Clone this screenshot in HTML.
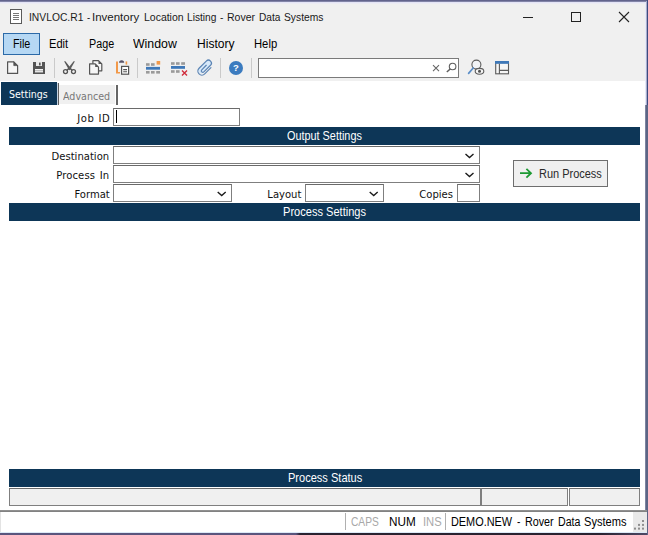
<!DOCTYPE html>
<html><head><meta charset="utf-8">
<style>
html,body{margin:0;padding:0;}
body{width:648px;height:535px;overflow:hidden;background:#f0f0f0;position:relative;font-family:"Liberation Sans",sans-serif;font-size:12px;color:#000;}
.abs{position:absolute;}
.t{position:absolute;white-space:nowrap;line-height:1;transform-origin:0 50%;}
.band{position:absolute;left:9px;width:631px;height:18px;background:#0d3657;}
.bt{position:absolute;white-space:nowrap;line-height:1;color:#fff;font-size:12px;transform-origin:0 50%;}
.inp{position:absolute;background:#fff;border:1px solid #7f7f7f;border-top-color:#6a6a6a;box-sizing:border-box;}
.lbl{position:absolute;white-space:nowrap;text-align:right;font-size:11px;line-height:1;color:#111;font-family:"DejaVu Sans","Liberation Sans",sans-serif;transform-origin:100% 50%;transform:scaleX(0.912);word-spacing:3px;}
.mn{font-size:12.5px;}
.sb{font-size:12.5px;}
</style></head><body>
<!-- window frame top -->
<div class="abs" style="left:0;top:0;width:648px;height:1px;background:#62648c"></div>
<div class="abs" style="left:0;top:1px;width:648px;height:1px;background:#8284a7"></div>
<div class="abs" style="left:0;top:2px;width:646px;height:1px;background:#e4e4f6"></div>
<div class="abs" style="left:0;top:3px;width:646px;height:1px;background:#ececf4"></div>
<!-- title -->
<svg class="abs" style="left:10px;top:9px" width="12" height="15" viewBox="0 0 12 15"><rect x="0.5" y="0.5" width="11" height="14" fill="#fff" stroke="#5a5a5a"/><path d="M3 4.5h6M3 6.5h6M3 8.5h6M3 10.5h6" stroke="#777" stroke-width="1"/></svg>
<div class="abs" style="left:0;top:12px;font-size:11px;color:#1a1a1a;height:11px;width:340px;"><span class="t" style="left:28.8px;top:0;transform:scaleX(0.936)">INVLOC.R1</span> <span class="t" style="left:86.5px;top:0;transform:scaleX(0.875)">-</span> <span class="t" style="left:92.06px;top:0;transform:scaleX(1.044)">Inventory</span> <span class="t" style="left:143.5px;top:0;transform:scaleX(0.952)">Location</span> <span class="t" style="left:186.7px;top:0;transform:scaleX(0.925)">Listing</span> <span class="t" style="left:220.2px;top:0;transform:scaleX(0.925)">-</span> <span class="t" style="left:227.0px;top:0;transform:scaleX(0.957)">Rover</span> <span class="t" style="left:259.1px;top:0;transform:scaleX(0.92)">Data</span> <span class="t" style="left:284.4px;top:0;transform:scaleX(0.935)">Systems</span> </div>
<svg class="abs" style="left:520px;top:8px" width="120" height="20" viewBox="0 0 120 20"><path d="M3 9.5h10" stroke="#222" stroke-width="1"/><rect x="51.5" y="4.5" width="9" height="9" fill="none" stroke="#222"/><path d="M99 4l10 10M109 4l-10 10" stroke="#222" stroke-width="1.1"/></svg>
<!-- menu -->
<div class="abs" style="left:3px;top:33px;width:37px;height:22px;box-sizing:border-box;border:1px solid #2c6aa8;background:#b6d8f4"></div>
<div class="t mn" style="left:12.8px;top:38px;transform:scaleX(0.86)">File</div>
<div class="t mn" style="left:49.4px;top:38px;transform:scaleX(0.89)">Edit</div>
<div class="t mn" style="left:88.9px;top:38px;transform:scaleX(0.86)">Page</div>
<div class="t mn" style="left:133px;top:38px;transform:scaleX(0.985)">Window</div>
<div class="t mn" style="left:196.5px;top:38px;transform:scaleX(0.964)">History</div>
<div class="t mn" style="left:253.8px;top:38px;transform:scaleX(0.90)">Help</div>
<!-- toolbar -->
<svg class="abs" style="left:0;top:56px" width="648" height="25" viewBox="0 0 648 25">
 <!-- new -->
 <path d="M7.6 5.8h6.2l3.8 3.8v7.8h-10z" fill="#f6f6f6" stroke="#555" stroke-width="1.2" stroke-linejoin="round"/>
 <path d="M13.8 5.8v3.8h3.8z" fill="#555" stroke="#555" stroke-width="0.8" stroke-linejoin="round"/>
 <!-- save -->
 <path d="M33 6h12v12h-12z" fill="#555"/>
 <rect x="36" y="6" width="6" height="4" fill="#e9e9e9"/>
 <rect x="39" y="6.6" width="1.6" height="2.8" fill="#555"/>
 <rect x="35" y="13" width="8" height="3.4" fill="#f4f4f4"/>
 <rect x="35" y="14.3" width="8" height="0.9" fill="#aaa"/>
 <!-- sep -->
 <rect x="54" y="2" width="1" height="20" fill="#cacaca"/>
 <!-- scissors -->
 <path d="M64.1 5.2h1.3l5.9 7.6l-2.2 1.4z" fill="#555"/>
 <path d="M74.9 5.2h-1.3l-5.9 7.6l2.2 1.4z" fill="#5c5c5c"/>
 <path d="M68.8 12.6l-2.2 2M70.2 12.6l2.2 2" stroke="#555" stroke-width="1.4"/>
 <circle cx="65.5" cy="15.6" r="2" fill="none" stroke="#555" stroke-width="1.3"/>
 <circle cx="73.5" cy="15.6" r="2" fill="none" stroke="#555" stroke-width="1.3"/>
 <!-- copy -->
 <path d="M92.9 4.7h5.6l3.3 3.3v6.8h-8.9z" fill="#f6f6f6" stroke="#555" stroke-width="1.2" stroke-linejoin="round"/>
 <path d="M98.5 4.7v3.3h3.3z" fill="#555"/>
 <path d="M89.6 7.8h5.6l3.3 3.3v7h-8.9z" fill="#f6f6f6" stroke="#555" stroke-width="1.2" stroke-linejoin="round"/>
 <path d="M95.2 7.8v3.3h3.3z" fill="#555"/>
 <!-- paste -->
 <path d="M116 5.4h2v10.6h2v1.6h-4z" fill="#f2994a"/>
 <rect x="125.6" y="5.4" width="1.6" height="3.2" fill="#f2994a"/>
 <path d="M119 6.8q0-2.6 2.6-2.6q2.6 0 2.6 2.6z" fill="#5a5468"/>
 <rect x="121.6" y="10.4" width="7" height="7.8" fill="#fff" stroke="#555" stroke-width="1.2"/>
 <path d="M123.2 13.6h3.8M123.2 15.8h3.8" stroke="#555" stroke-width="1.1"/>
 <!-- sep -->
 <rect x="137" y="2" width="1" height="20" fill="#cacaca"/>
 <!-- insert row -->
 <g fill="#9a9a9a">
 <rect x="146" y="7.2" width="3.6" height="2.6"/><rect x="151" y="7.2" width="3.6" height="2.6"/>
 <rect x="146" y="15" width="3.6" height="2.6"/><rect x="151" y="15" width="3.6" height="2.6"/><rect x="156.2" y="15" width="3.8" height="2.6"/>
 </g>
 <rect x="156.6" y="5" width="3.6" height="3.6" fill="#f2994a"/>
 <rect x="146" y="10.9" width="14" height="2.8" fill="#3e78b8"/>
 <!-- delete row -->
 <g fill="#9a9a9a">
 <rect x="171" y="6.2" width="3.6" height="2.6"/><rect x="176" y="6.2" width="3.6" height="2.6"/><rect x="181.2" y="6.2" width="3.8" height="2.6"/>
 <rect x="171" y="14.2" width="3.6" height="2.6"/><rect x="176" y="14.2" width="3.6" height="2.6"/>
 </g>
 <rect x="171" y="10" width="14" height="2.8" fill="#3e78b8"/>
 <path d="M182 14.6l5 5M187 14.6l-5 5" stroke="#d02c3c" stroke-width="1.4"/>
 <!-- paperclip -->
 <g transform="translate(205 11.7) rotate(45)">
 <path d="M-3.8 4.6V-5.6A3 3 0 0 1 2.2 -5.6V4.6A3 3 0 0 1 -3.8 4.6z" fill="#d6e8f9"/>
 <path d="M4.2 -4.2V4.6A4 4 0 0 1 -3.8 4.6V-5.6A3 3 0 0 1 2.2 -5.6V3.8A1.5 1.5 0 0 1 -0.8 3.8V-2.6" fill="none" stroke="#5b84b4" stroke-width="1.2" stroke-linecap="round"/>
 </g>
 <!-- sep -->
 <rect x="220" y="2" width="1" height="20" fill="#cacaca"/>
 <!-- help -->
 <circle cx="236" cy="12" r="7" fill="#3b7bbf"/>
 <text x="236" y="15.4" font-family="Liberation Sans, sans-serif" font-weight="bold" font-size="9.5" fill="#fff" text-anchor="middle">?</text>
 <!-- sep -->
 <rect x="251" y="2" width="1" height="20" fill="#cacaca"/>
 <!-- search-eye -->
 <circle cx="476.4" cy="8.6" r="4.5" fill="#f1f3f6" stroke="#5c5c5c" stroke-width="1.1"/>
 <path d="M473.2 12l-4.6 5.4" stroke="#5b8ec8" stroke-width="1.7" stroke-linecap="round"/>
 <ellipse cx="479.5" cy="15.3" rx="4.3" ry="2.9" fill="#f6f6f6" stroke="#5c5c5c" stroke-width="1.1"/>
 <circle cx="479.5" cy="15.3" r="1.5" fill="#505050"/>
 <!-- layout -->
 <rect x="495.7" y="6.6" width="12.8" height="11.2" fill="#f6f6f6" stroke="#5c5c5c" stroke-width="1.1"/>
 <rect x="495" y="5" width="14" height="2.8" fill="#3e78b8"/>
 <path d="M499.4 7.8v10.2M499.4 14.4h9" stroke="#5c5c5c" stroke-width="1.1"/>
</svg>
<div class="inp" style="left:258px;top:58px;width:201px;height:20px;border-color:#7a7a7a"></div>
<svg class="abs" style="left:430px;top:60px" width="28" height="16" viewBox="0 0 28 16"><path d="M3 5.2l6 6M9 5.2l-6 6" stroke="#666" stroke-width="1.1"/><circle cx="22.6" cy="6.5" r="3.3" fill="none" stroke="#5e5e5e" stroke-width="1.1"/><path d="M20.2 8.9l-3.4 3.2" stroke="#5e5e5e" stroke-width="1.4"/></svg>
<!-- content -->
<div class="abs" style="left:0;top:81px;width:646px;height:430px;background:#fff"></div>
<!-- tabs -->
<div class="abs" style="left:1px;top:82px;width:56px;height:23.3px;background:#0d3657"></div>
<div class="abs" style="left:57px;top:83px;width:0.6px;height:22.3px;background:#c5d3e2"></div><div class="abs" style="left:57.6px;top:83px;width:1.1px;height:22.3px;background:#5e5e5e"></div>
<div class="t" style="left:9.2px;top:89px;font-size:11px;color:#fff;font-family:'DejaVu Sans','Liberation Sans',sans-serif;transform:scaleX(0.86)">Settings</div>
<div class="abs" style="left:59.2px;top:84.8px;width:56.2px;height:19.5px;background:#f0f0f0"></div>
<div class="t" style="left:63.2px;top:90.6px;font-size:11px;color:#777;font-family:'DejaVu Sans','Liberation Sans',sans-serif;transform:scaleX(0.867)">Advanced</div>
<div class="abs" style="left:116.2px;top:85px;width:1.6px;height:19.7px;background:#666"></div>
<!-- form -->
<div class="lbl" style="right:537.4px;top:113.1px;letter-spacing:0.6px;word-spacing:0.6px">Job ID</div>
<div class="inp" style="left:113px;top:108px;width:127px;height:18px;"></div>
<div class="abs" style="left:116px;top:110px;width:1px;height:13px;background:#000"></div>
<div class="band" style="top:127px"></div>
<div class="bt" style="left:287.2px;top:130px;transform:scaleX(0.905)">Output Settings</div>
<div class="lbl" style="right:538.6px;top:150.7px">Destination</div>
<div class="inp" style="left:113px;top:146px;width:367px;height:18px;"></div>
<div class="lbl" style="right:538.2px;top:169.7px;letter-spacing:0.15px;word-spacing:1.4px">Process In</div>
<div class="inp" style="left:113px;top:165px;width:367px;height:18px;"></div>
<div class="lbl" style="right:538.6px;top:188.7px">Format</div>
<div class="inp" style="left:113px;top:184px;width:119px;height:18px;"></div>
<div class="lbl" style="right:346.6px;top:188.7px">Layout</div>
<div class="inp" style="left:305px;top:184px;width:79px;height:18px;"></div>
<div class="lbl" style="right:194.8px;top:188.7px">Copies</div>
<div class="inp" style="left:457px;top:184px;width:23px;height:18px;"></div>
<svg class="abs" style="left:0;top:146px" width="648" height="56" viewBox="0 0 648 56"><g fill="none" stroke="#1a1a1a" stroke-width="1.35"><path d="M465.5 7.9l4 3.6l4 -3.6"/><path d="M465.5 26.9l4 3.6l4 -3.6"/><path d="M217.7 45.9l4 3.6l4 -3.6"/><path d="M369.7 45.9l4 3.6l4 -3.6"/></g></svg>
<div class="band" style="top:203px"></div>
<div class="bt" style="left:283.3px;top:206px;transform:scaleX(0.922)">Process Settings</div>
<!-- run button -->
<div class="abs" style="left:513px;top:160px;width:95px;height:27px;box-sizing:border-box;border:1px solid #6e6e6e;background:#f0f0f0"></div>
<svg class="abs" style="left:518px;top:166px" width="16" height="14" viewBox="0 0 16 14"><path d="M2 7.2h10.5M8.4 2.8l4.6 4.4l-4.6 4.4" fill="none" stroke="#1d9a33" stroke-width="1.8"/></svg>
<div class="t" style="left:539.4px;top:168px;font-size:12px;color:#2a2a2a;transform:scaleX(0.914)">Run Process</div>
<!-- status -->
<div class="band" style="top:469px"></div>
<div class="bt" style="left:288px;top:472px;transform:scaleX(0.92)">Process Status</div>
<div class="inp" style="left:9px;top:488px;width:472px;height:18px;background:#f0f0f0"></div>
<div class="inp" style="left:481px;top:488px;width:87px;height:18px;background:#f0f0f0"></div>
<div class="inp" style="left:569px;top:488px;width:71px;height:18px;background:#f0f0f0"></div>
<!-- statusbar -->
<div class="abs" style="left:0;top:510px;width:647px;height:1px;background:#909090"></div>
<div class="abs" style="left:0;top:511px;width:647px;height:1px;background:#828282"></div>
<div class="abs" style="left:0;top:512px;width:646px;height:20px;background:#fff"></div>
<div class="abs" style="left:633px;top:512px;width:14px;height:20px;background:#e9e9e9"></div>
<div class="abs" style="left:0;top:512px;width:1px;height:20px;background:#e3e3e3"></div>
<div class="abs" style="left:345px;top:513px;width:1px;height:17px;background:#b0b0b0"></div>
<div class="abs" style="left:445px;top:513px;width:1px;height:17px;background:#b0b0b0"></div>
<div class="abs" style="left:0;top:515.8px;font-size:12px;height:12px;width:640px;"><span class="t" style="left:351.0px;top:0;color:#a8a8a8;transform:scaleX(0.851)">CAPS</span> <span class="t" style="left:388.6px;top:0;color:#000;transform:scaleX(0.977)">NUM</span> <span class="t" style="left:422.57px;top:0;color:#a8a8a8;transform:scaleX(0.932)">INS</span> <span class="t" style="left:450.5px;top:0;color:#000;transform:scaleX(0.907)">DEMO.NEW</span> <span class="t" style="left:517.3px;top:0;color:#000;transform:scaleX(0.85)">-</span> <span class="t" style="left:524.6px;top:0;color:#000;transform:scaleX(0.896)">Rover</span> <span class="t" style="left:558.0px;top:0;color:#000;transform:scaleX(0.884)">Data</span> <span class="t" style="left:584.4px;top:0;color:#000;transform:scaleX(0.924)">Systems</span> </div>
<svg class="abs" style="left:633px;top:518px" width="13" height="14" viewBox="0 0 13 14"><g fill="#8e8e8e"><rect x="9" y="2" width="2" height="2"/><rect x="5" y="5.9" width="2" height="2"/><rect x="9" y="5.9" width="2" height="2"/><rect x="1" y="9.6" width="2" height="2"/><rect x="5" y="9.6" width="2" height="2"/><rect x="9" y="9.6" width="2" height="2"/></g></svg>
<!-- borders -->
<div class="abs" style="left:0;top:532px;width:648px;height:1px;background:#dbe9f6"></div>
<div class="abs" style="left:0;top:533px;width:648px;height:2px;background:linear-gradient(90deg,#5a557d 0,#5a557d 296px,#2a2230 300px,#2a2230 600px,#4e4966 648px)"></div>
<div class="abs" style="left:645px;top:2px;width:1px;height:103px;background:#e6e9f8"></div>
<div class="abs" style="left:646px;top:1px;width:1px;height:104px;background:#a9aecb"></div>
<div class="abs" style="left:647px;top:0;width:1px;height:105px;background:#3c4a80"></div>
<div class="abs" style="left:645px;top:105px;width:1px;height:405px;background:#7d84a0"></div>
<div class="abs" style="left:646px;top:105px;width:1px;height:405px;background:#5c6585"></div><div class="abs" style="left:647px;top:105px;width:1px;height:430px;background:#5c6585"></div>
</body></html>
